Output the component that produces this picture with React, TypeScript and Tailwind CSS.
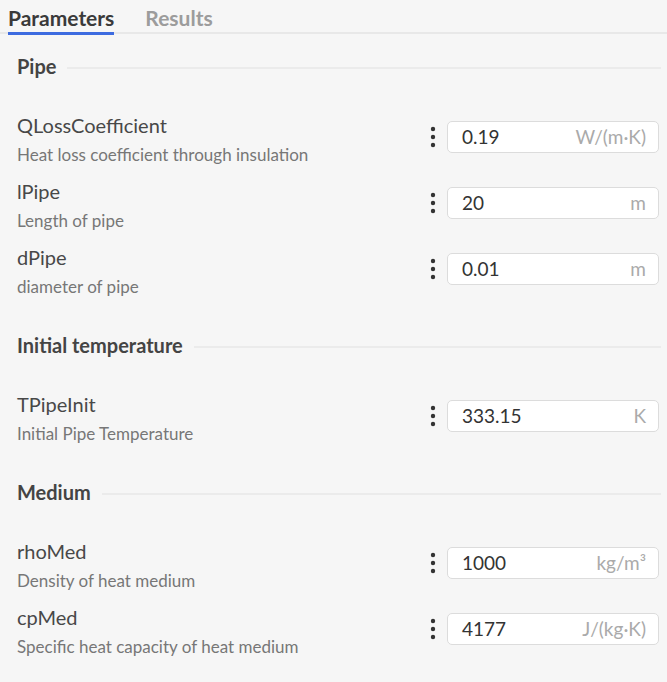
import { Fragment } from "react";

type Parametro = {
  nombre: string;
  descripcion: string;
  valor: string;
  unidad: string;
};

type Seccion = {
  titulo: string;
  parametros: Parametro[];
};

const secciones: Seccion[] = [
  {
    titulo: "Pipe",
    parametros: [
      {
        nombre: "QLossCoefficient",
        descripcion: "Heat loss coefficient through insulation",
        valor: "0.19",
        unidad: "W/(m·K)",
      },
      { nombre: "lPipe", descripcion: "Length of pipe", valor: "20", unidad: "m" },
      { nombre: "dPipe", descripcion: "diameter of pipe", valor: "0.01", unidad: "m" },
    ],
  },
  {
    titulo: "Initial temperature",
    parametros: [
      {
        nombre: "TPipeInit",
        descripcion: "Initial Pipe Temperature",
        valor: "333.15",
        unidad: "K",
      },
    ],
  },
  {
    titulo: "Medium",
    parametros: [
      {
        nombre: "rhoMed",
        descripcion: "Density of heat medium",
        valor: "1000",
        unidad: "kg/m³",
      },
      {
        nombre: "cpMed",
        descripcion: "Specific heat capacity of heat medium",
        valor: "4177",
        unidad: "J/(kg·K)",
      },
    ],
  },
];

function IconoMenu() {
  return (
    <svg width="6" height="22" viewBox="0 0 6 22" className="shrink-0 text-[#333]">
      <circle cx="3" cy="3" r="2.2" fill="currentColor" />
      <circle cx="3" cy="11" r="2.2" fill="currentColor" />
      <circle cx="3" cy="19" r="2.2" fill="currentColor" />
    </svg>
  );
}

function FilaParametro({ parametro }: { parametro: Parametro }) {
  return (
    <div className="flex h-[66px] items-start">
      <div className="pt-[8px]">
        <div className="text-[20px] leading-[26px] text-[#484848]">{parametro.nombre}</div>
        <div className="mt-[5px] text-[17px] leading-[24px] text-[#777]">
          {parametro.descripcion}
        </div>
      </div>
      <div className="ml-auto flex items-center gap-[11px] self-center">
        <IconoMenu />
        <div className="flex h-[32px] w-[212px] items-center rounded-[5px] border border-[#dcdcdc] bg-white pl-[14px] pr-[12px]">
          <span className="flex-1 text-[19px] text-[#333]">{parametro.valor}</span>
          <span className="text-[19px] text-[#aaa]">{parametro.unidad}</span>
        </div>
      </div>
    </div>
  );
}

export default function App() {
  return (
    <div className="min-h-screen bg-[#f6f6f6] font-['Lato',sans-serif]">
      <div className="flex gap-[31px] border-b-2 border-[#e8e8e8] px-2">
        <button
          type="button"
          className="-mb-[3px] h-[35px] border-b-[3px] border-[#3d6be0] pt-[3px] text-[21px] font-bold leading-[26px] text-[#3a3a3a]"
        >
          Parameters
        </button>
        <button
          type="button"
          className="-mb-[3px] h-[35px] border-b-[3px] border-transparent pt-[3px] text-[21px] font-bold leading-[26px] text-[#9c9c9c]"
        >
          Results
        </button>
      </div>

      <div className="flex flex-col gap-[31px] pl-[17px] pr-[8px] pt-[20px]">
        {secciones.map((seccion) => (
          <Fragment key={seccion.titulo}>
            <section>
              <div className="-mr-[2px] flex items-center gap-[11px]">
                <h2 className="text-[20px] font-bold leading-[24px] text-[#444]">
                  {seccion.titulo}
                </h2>
                <div className="mt-[3px] h-[2px] flex-1 bg-[#ebebeb]" />
              </div>
              <div className="mt-[26px]">
                {seccion.parametros.map((parametro) => (
                  <FilaParametro key={parametro.nombre} parametro={parametro} />
                ))}
              </div>
            </section>
          </Fragment>
        ))}
      </div>
    </div>
  );
}
